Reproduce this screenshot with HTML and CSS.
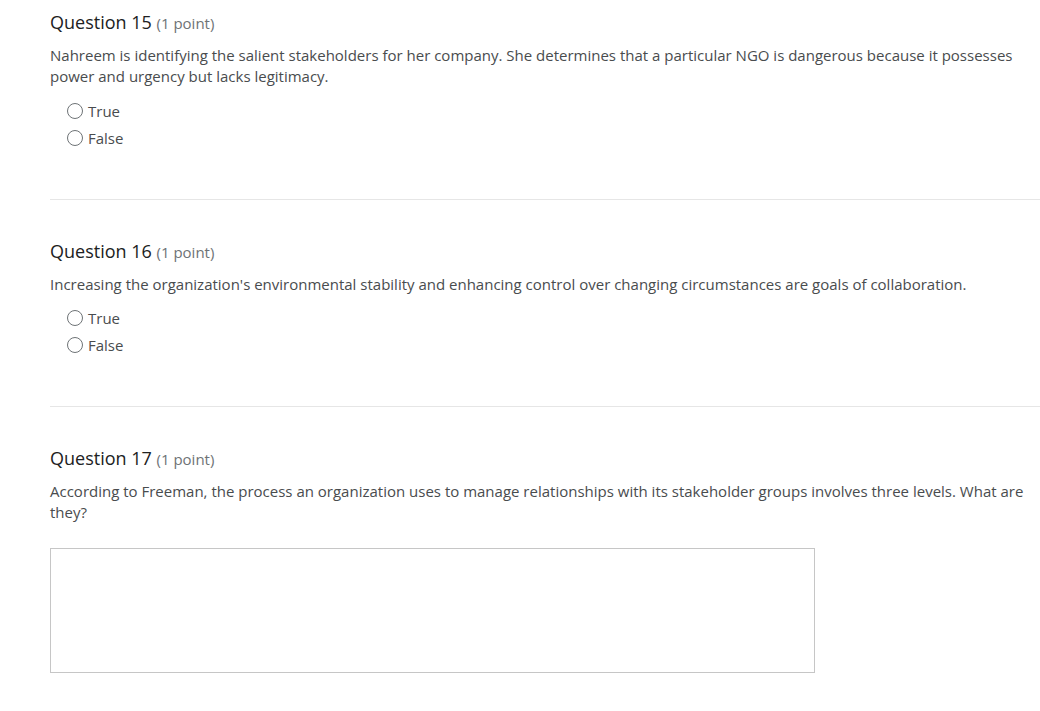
FILE: index.html
```html
<!DOCTYPE html>
<html>
<head>
<meta charset="utf-8">
<link rel="stylesheet" href="styles.css">
</head>
<body>
<div class="page">
  <section class="question">
    <h2 class="q-title">Question 15 <span class="q-points">(1 point)</span></h2>
    <p class="q-text">Nahreem is identifying the salient stakeholders for her company. She determines that a particular NGO is dangerous because it possesses power and urgency but lacks legitimacy.</p>
    <div class="options">
      <label class="option"><span class="radio"></span><span>True</span></label>
      <label class="option"><span class="radio"></span><span>False</span></label>
    </div>
  </section>
  <hr class="sep">
  <section class="question">
    <h2 class="q-title">Question 16 <span class="q-points">(1 point)</span></h2>
    <p class="q-text">Increasing the organization's environmental stability and enhancing control over changing circumstances are goals of collaboration.</p>
    <div class="options">
      <label class="option"><span class="radio"></span><span>True</span></label>
      <label class="option"><span class="radio"></span><span>False</span></label>
    </div>
  </section>
  <hr class="sep">
  <section class="question">
    <h2 class="q-title">Question 17 <span class="q-points">(1 point)</span></h2>
    <p class="q-text">According to Freeman, the process an organization uses to manage relationships with its stakeholder groups involves three levels. What are they?</p>
    <div class="answer"></div>
  </section>
</div>
</body>
</html>
```
FILE: styles.css
```css
html, body {
  margin: 0;
  padding: 0;
  background: #fff;
}
body {
  font-family: "Open Sans", "Liberation Sans", sans-serif;
  color: #494c4e;
}
.page {
  padding: 10px 0 0 50px;
}
.question {
  margin: 0;
}
.q-title {
  margin: 0;
  font-size: 18px;
  font-weight: 400;
  color: #202122;
  line-height: 24px;
}
.q-points {
  font-size: 15px;
  color: #6e7376;
}
.q-text {
  margin: 10px 0 0;
  font-size: 15px;
  line-height: 21px;
  padding-right: 10px;
}
.options {
  margin-top: 12.5px;
  padding-left: 17px;
  display: flex;
  flex-direction: column;
  gap: 5px;
}
.option {
  display: flex;
  align-items: center;
  gap: 5px;
  font-size: 15px;
  line-height: 22px;
}
.radio {
  width: 14px;
  height: 14px;
  border: 1px solid #6e7376;
  border-radius: 50%;
  box-sizing: content-box;
}
.sep {
  border: 0;
  border-top: 1px solid #e6e6e6;
  margin: 50px 0 39px;
}
.answer {
  margin-top: 25px;
  width: 763px;
  height: 123px;
  border: 1px solid #c6c6c6;
}
```
